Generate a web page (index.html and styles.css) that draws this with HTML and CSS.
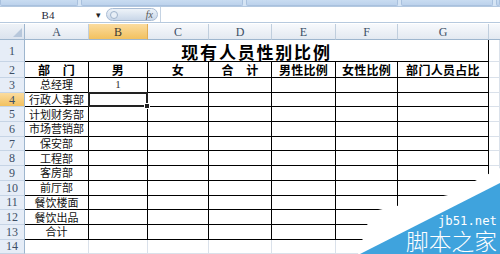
FILE: index.html
```html
<!DOCTYPE html>
<html lang="zh">
<head>
<meta charset="utf-8">
<title>现有人员性别比例</title>
<link rel="stylesheet" href="styles.css">
</head>
<body>
<div class="app">
  <div class="ribbon">
    <div class="group g1"></div>
    <div class="group g2"></div>
    <div class="group g3"></div>
    <div class="group g4"></div>
    <div class="group g5"></div>
  </div>
  <div class="fbar">
    <div class="namebox"><span class="name">B4</span><span class="drop">▾</span></div>
    <div class="capsule"><span class="knob"></span><span class="fx">fx</span></div>
    <div class="finput"></div>
  </div>
  <div class="sheet">
    <div class="corner"></div>
    <div class="ch">A</div><div class="ch sel">B</div><div class="ch">C</div><div class="ch">D</div><div class="ch">E</div><div class="ch">F</div><div class="ch">G</div><div class="ch last"></div>

    <div class="rh">1</div>
    <div class="title">现有人员性别比例</div>
    <div class="c"></div>

    <div class="rh">2</div>
    <div class="t h">部　门</div><div class="t h">男</div><div class="t h">女</div><div class="t h">合　计</div><div class="t h">男性比例</div><div class="t h">女性比例</div><div class="t h">部门人员占比</div><div class="c"></div>

    <div class="rh">3</div>
    <div class="t">总经理</div><div class="t num">1</div><div class="t"></div><div class="t"></div><div class="t"></div><div class="t"></div><div class="t"></div><div class="c"></div>

    <div class="rh sel">4</div>
    <div class="t">行政人事部</div><div class="t active"></div><div class="t"></div><div class="t"></div><div class="t"></div><div class="t"></div><div class="t"></div><div class="c"></div>

    <div class="rh">5</div>
    <div class="t">计划财务部</div><div class="t"></div><div class="t"></div><div class="t"></div><div class="t"></div><div class="t"></div><div class="t"></div><div class="c"></div>

    <div class="rh">6</div>
    <div class="t">市场营销部</div><div class="t"></div><div class="t"></div><div class="t"></div><div class="t"></div><div class="t"></div><div class="t"></div><div class="c"></div>

    <div class="rh">7</div>
    <div class="t">保安部</div><div class="t"></div><div class="t"></div><div class="t"></div><div class="t"></div><div class="t"></div><div class="t"></div><div class="c"></div>

    <div class="rh">8</div>
    <div class="t">工程部</div><div class="t"></div><div class="t"></div><div class="t"></div><div class="t"></div><div class="t"></div><div class="t"></div><div class="c"></div>

    <div class="rh">9</div>
    <div class="t">客房部</div><div class="t"></div><div class="t"></div><div class="t"></div><div class="t"></div><div class="t"></div><div class="t"></div><div class="c"></div>

    <div class="rh">10</div>
    <div class="t">前厅部</div><div class="t"></div><div class="t"></div><div class="t"></div><div class="t"></div><div class="t"></div><div class="t"></div><div class="c"></div>

    <div class="rh">11</div>
    <div class="t">餐饮楼面</div><div class="t"></div><div class="t"></div><div class="t"></div><div class="t"></div><div class="t"></div><div class="t"></div><div class="c"></div>

    <div class="rh">12</div>
    <div class="t">餐饮出品</div><div class="t"></div><div class="t"></div><div class="t"></div><div class="t"></div><div class="t"></div><div class="t"></div><div class="c"></div>

    <div class="rh">13</div>
    <div class="t">合计</div><div class="t"></div><div class="t"></div><div class="t"></div><div class="t"></div><div class="t"></div><div class="t"></div><div class="c"></div>

    <div class="rh">14</div>
    <div class="c"></div><div class="c"></div><div class="c"></div><div class="c"></div><div class="c"></div><div class="c"></div><div class="c"></div><div class="c"></div>
  </div>

  <svg class="watermark" width="150" height="90" viewBox="0 0 150 90">
    <polygon points="150,4 98,31 28,46 17,61 8,90 150,90" fill="#ffffff"/>
    <polygon points="10,90 150,19 150,90" fill="#3fa3dd"/>
    <text x="88" y="61" class="wm-url" textLength="59" lengthAdjust="spacingAndGlyphs">jb51.net</text>
    <text x="56" y="86" class="wm-name" textLength="91" lengthAdjust="spacingAndGlyphs">脚本之家</text>
  </svg>
</div>
</body>
</html>
```
FILE: styles.css
```css
html, body {
  margin: 0;
  padding: 0;
  background: #ffffff;
}
.app {
  position: relative;
  width: 500px;
  height: 254px;
  overflow: hidden;
  background: #ffffff;
  font-family: "Noto Sans CJK SC", "Noto Sans", sans-serif;
}

/* ribbon remnant */
.ribbon {
  height: 6px;
  display: flex;
  gap: 3px;
  background: #d5e4f4;
  border-bottom: 1px solid #b3c8e0;
}
.group {
  height: 5px;
  background: linear-gradient(#c9dcf1, #bcd2ec);
  border: 1px solid #a9c1de;
  border-top: none;
  border-radius: 0 0 2px 2px;
}
.g1 { width: 76px; }
.g2 { width: 160px; }
.g3 { width: 150px; }
.g4 { width: 90px; }
.g5 { flex: 1; }

/* formula bar */
.fbar {
  height: 15px;
  display: flex;
  align-items: stretch;
  background: #ffffff;
  border-bottom: 1px solid #b6c9de;
}
.namebox {
  width: 106px;
  display: flex;
  align-items: center;
  position: relative;
  font-family: "Liberation Serif", serif;
  font-size: 11px;
  color: #1f2a3a;
}
.name {
  width: 96px;
  text-align: center;
}
.drop {
  font-size: 9px;
  color: #222;
  font-family: "DejaVu Sans", sans-serif;
}
.capsule {
  width: 52px;
  margin: 1px 0;
  border-radius: 7px;
  background: linear-gradient(#eef3f9, #c9d7e8);
  border: 1px solid #a9bcd4;
  display: flex;
  align-items: center;
  justify-content: space-between;
  padding: 0 4px 0 3px;
  box-sizing: border-box;
}
.knob {
  width: 6px;
  height: 6px;
  border-radius: 50%;
  border: 1px solid #9fb3cb;
  background: #e7eef6;
}
.fx {
  font-family: "Liberation Serif", serif;
  font-style: italic;
  font-size: 10px;
  color: #555;
}
.finput {
  flex: 1;
  margin-left: 2px;
  border-left: 1px solid #c5d3e3;
}

/* sheet grid */
.sheet {
  margin-top: 1px;
  display: grid;
  grid-template-columns: 25px 64px 59px 61px 63px 64px 62px 91px 1fr;
  grid-template-rows: 16px 22px 16px repeat(12, 14.7px);
  background: #ffffff;
}
.corner {
  background: linear-gradient(#eef2f7, #dbe3ee);
  border-right: 1px solid #9eb6ce;
  border-bottom: 1px solid #9eb6ce;
  position: relative;
}
.corner::after {
  content: "";
  position: absolute;
  right: 2px;
  bottom: 2px;
  width: 0;
  height: 0;
  border-left: 9px solid transparent;
  border-bottom: 9px solid #b7c7db;
}
.ch {
  background: linear-gradient(#f7f9fc, #e3e9f1);
  border-right: 1px solid #c0cedd;
  border-bottom: 1px solid #9eb6ce;
  font-family: "Liberation Serif", serif;
  font-size: 12px;
  line-height: 1;
  color: #3d4f66;
  display: flex;
  align-items: center;
  justify-content: center;
}
.ch.sel {
  background: linear-gradient(#fbdc9f, #f2c15f);
  color: #3d3a33;
  border-right-color: #e2ae55;
}
.ch.last {
  border-right: none;
}
.rh {
  background: #e6edf7;
  border-right: 1px solid #9eb6ce;
  border-bottom: 1px solid #c6d4e5;
  font-family: "Liberation Serif", serif;
  font-size: 12px;
  line-height: 1;
  color: #3d4f66;
  display: flex;
  align-items: center;
  justify-content: center;
}
.rh.sel {
  background: linear-gradient(#fbdc9f, #f2c15f);
}
.c {
  border-right: 1px solid #dae1ea;
  border-bottom: 1px solid #dae1ea;
}
.title {
  grid-column: 2 / 9;
  border-right: 1px solid #000;
  border-bottom: 1px solid #000;
  display: flex;
  align-items: center;
  justify-content: center;
  font-size: 17px;
  line-height: 1;
  font-weight: 700;
  letter-spacing: 1.8px;
  color: #000;
  padding-top: 1px;
}
.t {
  border-right: 1px solid #000;
  border-bottom: 1px solid #000;
  display: flex;
  align-items: center;
  justify-content: center;
  font-size: 11px;
  color: #111;
  line-height: 1;
  white-space: nowrap;
}
.t.h {
  font-size: 12px;
  font-weight: 700;
  letter-spacing: 0.3px;
  color: #000;
}
.t.num {
  font-family: "Liberation Serif", serif;
  font-size: 11px;
  color: #333;
}
.t.active {
  position: relative;
}
.t.active::after {
  content: "";
  position: absolute;
  left: -1px;
  top: -1px;
  right: -1px;
  bottom: -1px;
  border: 2px solid #222;
}
.t.active::before {
  content: "";
  position: absolute;
  right: -3px;
  bottom: -3px;
  width: 4px;
  height: 4px;
  background: #222;
  border: 1px solid #fff;
  z-index: 2;
}

/* watermark overlay */
.watermark {
  position: absolute;
  right: 0;
  bottom: 0;
}
.wm-url {
  font-family: "DejaVu Sans Mono", monospace;
  font-size: 13px;
  fill: #ffffff;
}
.wm-name {
  font-family: "Noto Sans CJK SC", sans-serif;
  font-size: 23px;
  font-weight: 300;
  fill: #ffffff;
}
```
